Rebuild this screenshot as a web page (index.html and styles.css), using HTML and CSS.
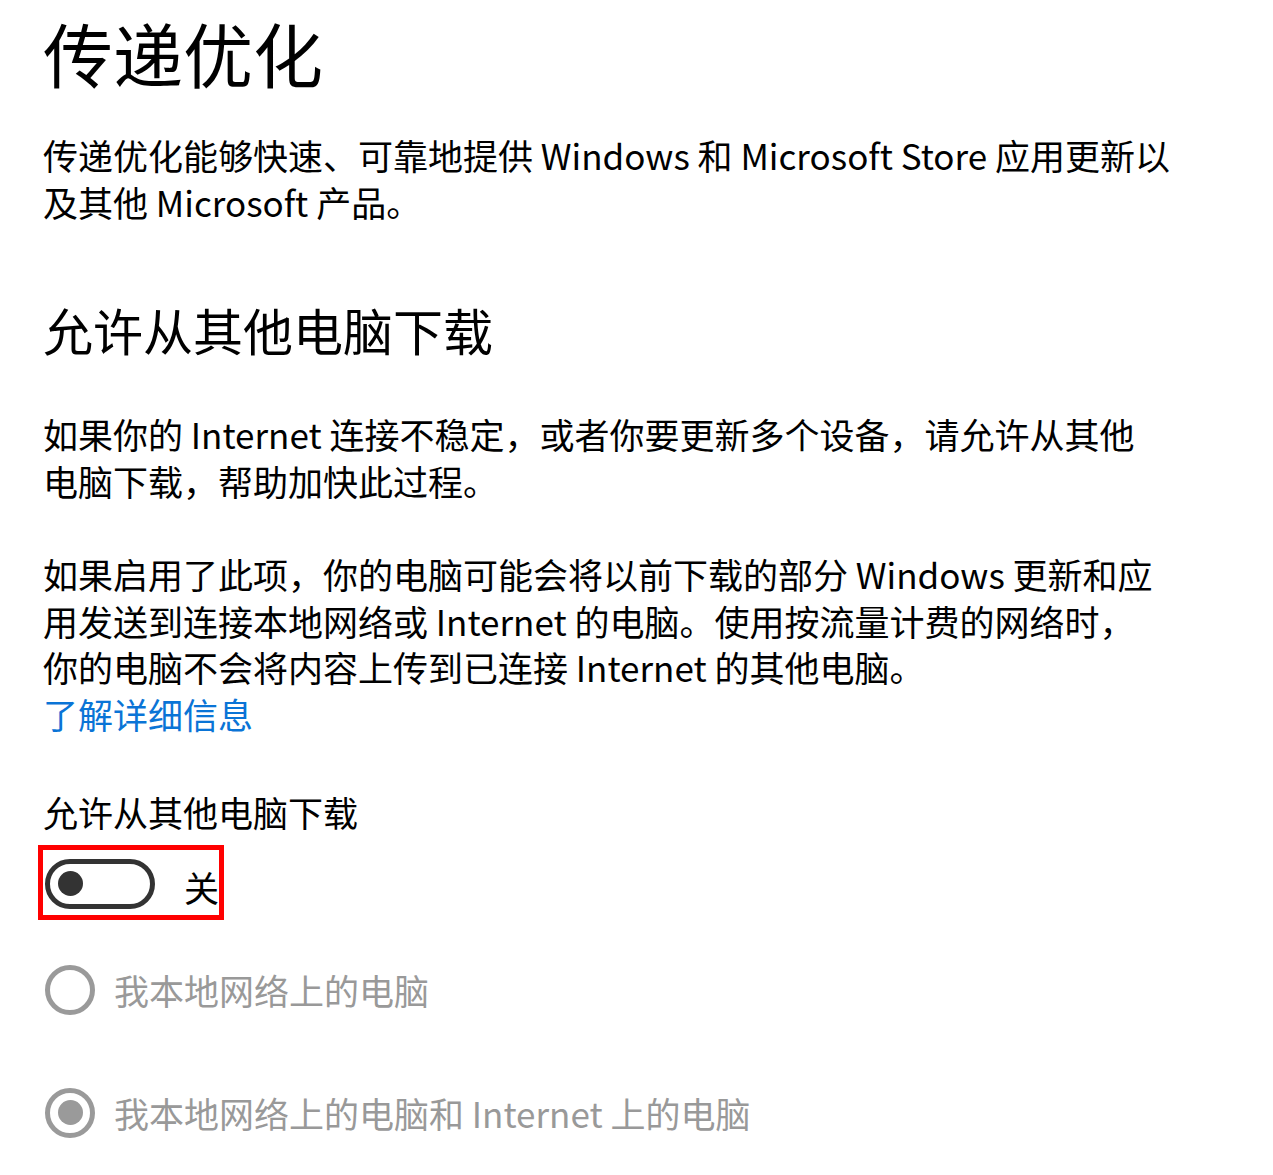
FILE: index.html
```html
<!DOCTYPE html>
<html lang="zh-CN">
<head>
<meta charset="utf-8">
<title>传递优化</title>
<link rel="stylesheet" href="styles.css">
</head>
<body>
<main class="page">
  <h1 class="title">传递优化</h1>
  <p class="text intro">传递优化能够快速、可靠地提供 Windows 和 Microsoft Store 应用更新以<br>及其他 Microsoft 产品。</p>
  <h2 class="subtitle">允许从其他电脑下载</h2>
  <p class="text p2">如果你的 Internet 连接不稳定，或者你要更新多个设备，请允许从其他<br>电脑下载，帮助加快此过程。</p>
  <p class="text p3">如果启用了此项，你的电脑可能会将以前下载的部分 Windows 更新和应<br>用发送到连接本地网络或 Internet 的电脑。使用按流量计费的网络时，<br>你的电脑不会将内容上传到已连接 Internet 的其他电脑。<br><a class="link" href="#">了解详细信息</a></p>
  <div class="label">允许从其他电脑下载</div>
  <div class="highlight">
    <div class="toggle"><span class="knob"></span></div>
    <span class="state">关</span>
  </div>
  <div class="radios">
    <div class="radio"><span class="circle"></span><span class="radio-text">我本地网络上的电脑</span></div>
    <div class="radio checked"><span class="circle"><span class="dot"></span></span><span class="radio-text">我本地网络上的电脑和 Internet 上的电脑</span></div>
  </div>
</main>
</body>
</html>
```

FILE: styles.css
```css
html, body {
  margin: 0;
  padding: 0;
  background: #ffffff;
}

body {
  font-family: "Noto Sans CJK SC", "Noto Sans", sans-serif;
  color: #000000;
}

.page {
  padding: 13px 0 0 43px;
}

.title {
  margin: 0;
  font-size: 70px;
  line-height: 80px;
  font-weight: 400;
}

.text {
  margin: 0;
  font-size: 35px;
  line-height: 47px;
  white-space: nowrap;
}

.intro {
  margin-top: 38px;
}

.subtitle {
  margin: 72px 0 0;
  font-size: 50px;
  line-height: 64px;
  font-weight: 400;
}

.p2 {
  margin-top: 49px;
}

.p3 {
  margin-top: 47px;
  line-height: 46.5px;
}

.link {
  color: #0a74d6;
  text-decoration: none;
}

.label {
  margin-top: 52px;
  font-size: 35px;
  line-height: 46.5px;
}

.highlight {
  margin-top: 9px;
  margin-left: -5px;
  display: inline-flex;
  align-items: center;
  border: 5px solid #ff0000;
  padding: 8px 0 5px 2px;
}

.toggle {
  box-sizing: border-box;
  width: 110px;
  height: 50px;
  border: 5px solid #333333;
  border-radius: 25px;
  display: flex;
  align-items: center;
  padding-left: 8px;
}

.knob {
  width: 25px;
  height: 25px;
  border-radius: 50%;
  background: #333333;
}

.state {
  margin-left: 29px;
  padding-top: 6px;
  font-size: 35px;
  line-height: 46px;
}

.radios {
  margin-top: 45px;
  display: flex;
  flex-direction: column;
  gap: 73px;
}

.radio {
  display: flex;
  align-items: center;
  gap: 19px;
  margin-left: 2px;
}

.circle {
  box-sizing: border-box;
  width: 50px;
  height: 50px;
  border: 5px solid #9a9a9a;
  border-radius: 50%;
  display: flex;
  align-items: center;
  justify-content: center;
}

.dot {
  width: 25px;
  height: 25px;
  border-radius: 50%;
  background: #9a9a9a;
}

.radio-text {
  font-size: 35px;
  line-height: 50px;
  color: #999999;
}
```
